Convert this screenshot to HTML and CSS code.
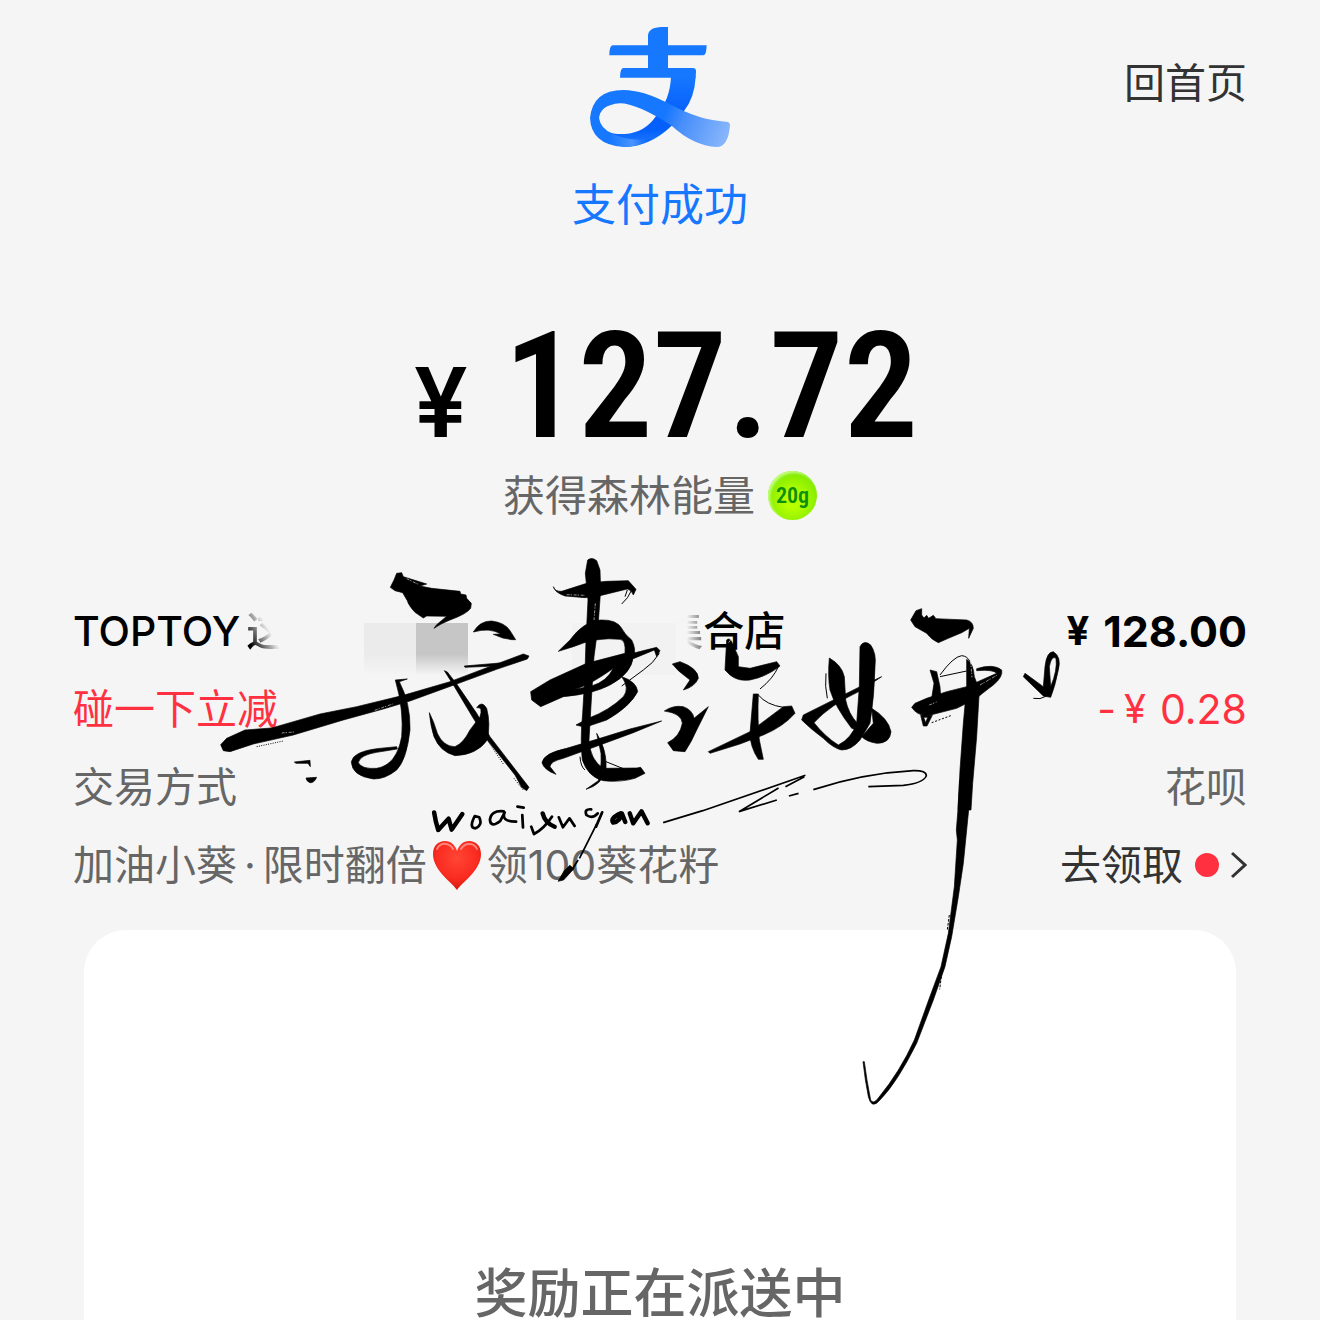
FILE: index.html
```
<!DOCTYPE html>
<html lang="zh-CN">
<head>
<meta charset="utf-8">
<meta name="viewport" content="width=device-width, initial-scale=1">
<title>支付成功</title>
<link rel="stylesheet" href="styles.css">
</head>
<body>
<main class="page">
  <header class="header">
    <svg class="logo" viewBox="60 51 420 360" aria-hidden="true">
      <defs>
        <linearGradient id="leg" x1="0" y1="200" x2="0" y2="400" gradientUnits="userSpaceOnUse">
          <stop offset="0" stop-color="#1677ff"/><stop offset=".55" stop-color="#0560fb"/><stop offset=".8" stop-color="#0560fb"/><stop offset="1" stop-color="#1d78ff"/>
        </linearGradient>
        <linearGradient id="ribbon" x1="290" y1="300" x2="470" y2="370" gradientUnits="userSpaceOnUse">
          <stop offset="0" stop-color="#1677ff"/><stop offset=".3" stop-color="#488ffb"/><stop offset="1" stop-color="#86b5fb"/>
        </linearGradient>
        <linearGradient id="curl" x1="120" y1="0" x2="240" y2="0" gradientUnits="userSpaceOnUse">
          <stop offset="0" stop-color="#1677ff"/><stop offset=".55" stop-color="#4a94ff"/><stop offset="1" stop-color="#0560fb"/>
        </linearGradient>
      </defs>
      <path fill="#1677ff" d="M234 180V76Q236 52 275 51H294V180ZM118 136Q118 107 128 106H410Q409 136 400 136ZM150 203Q150 174 161 174H368Q378 174 378 184L377 203Z"/>
      <path fill="url(#leg)" d="M303 200H377Q374 262 342 303L305 347Q240 410 160 411L110 365Q130 373 165 372Q225 368 258 318Q300 270 303 200Z"/>
      <path fill="url(#curl)" d="M87 324Q92 356 126 370Q170 396 246 387Q205 411 160 411Q62 404 60 322Z"/>
      <path fill="url(#ribbon)" d="M60 325Q68 240 160 240Q220 240 300 283Q390 332 468 335Q480 336 480 345Q475 411 440 411Q370 407 305 347Q200 280 150 280Q88 285 87 328Z"/>
    </svg>
    <h1 class="status">支付成功</h1>
    <a class="home" href="#">回首页</a>
  </header>

  <p class="amount"><span class="currency">¥</span><span>127.72</span></p>
  <p class="energy">获得森林能量<span class="bubble">20g</span></p>

  <section class="details">
    <div class="row merchant">
      <span class="name"><span>TOPTOY</span><span class="fade-out">这</span><span class="mosaic"><i class="tile light"></i><i class="tile dark"></i></span><span class="mosaic pale"></span><span class="fade-in">集</span><span>合店</span></span>
      <span class="price"><span class="yen">¥</span>128.00</span>
    </div>
    <div class="row discount">
      <span>碰一下立减</span>
      <span class="price"><span class="minus">-</span><span class="yen">¥</span>0.28</span>
    </div>
    <div class="row">
      <span>交易方式</span>
      <span>花呗</span>
    </div>
    <div class="row">
      <span class="promo">加油小葵<span class="separator">·</span>限时翻倍<svg class="heart" viewBox="0 0 50 50" role="img" aria-label="红心"><defs><radialGradient id="red" cx=".5" cy=".35" r=".65"><stop offset="0" stop-color="#ff4535"/><stop offset=".65" stop-color="#fa2b20"/><stop offset="1" stop-color="#d4170f"/></radialGradient></defs><path fill="url(#red)" d="M25 50C21 43 1 31 1 14C1 6 6 1 13 1C19 1 23 5 25 11C27 5 31 1 37 1C44 1 49 6 49 14C49 31 29 43 25 50Z"/><path fill="none" stroke="#ff9b92" stroke-width="2" stroke-linecap="round" opacity=".8" d="M5 9Q8 3 14 4Q19 5 21 9M29 9Q32 4 37 4Q43 4 45 9"/></svg>领100葵花籽</span>
      <a class="claim" href="#">去领取<i class="dot"></i><svg class="chevron" viewBox="0 0 16 28" aria-hidden="true"><path d="M1 2L14 14L1 26"/></svg></a>
    </div>

    <!-- Brush signature laid over the receipt -->
    <svg class="ink" viewBox="210 540 860 580" aria-hidden="true">
      <g transform="translate(210 540) scale(.33333)">
        <path d="M541 142L552 120L560 100L575 98L580 110L605 118L650 132L630 138L665 145L750 154L752 162L768 165L770 175L784 190L782 205Q770 222 720 240Q690 252 672 265L680 254L710 229L650 228L640 234L615 217Q595 195 592 182L578 158L555 152Z"/>
        <path d="M790 276Q810 242 845 243Q885 248 900 272L917 299L905 299L878 294L850 283L872 282Q840 262 790 276Z"/>
        <path d="M32 614L50 595L105 570L185 564L240 548L330 522L440 500L580 466L720 425L860 372L940 342L957 348L952 357L860 388L740 432L600 483L520 507L400 540L250 585L130 612L60 635L40 632Z"/>
        <path d="M763 378L870 369L860 378L765 382Z"/>
        <path d="M556 420L592 417L568 425Q602 490 600 570Q590 660 560 690Q525 718 490 717Q425 708 424 665Q430 635 500 626L560 620L562 627L500 637Q450 645 445 668Q455 688 500 685Q560 675 575 590Q582 510 556 420Z"/>
        <path d="M703 392L712 396L740 432L800 520L840 590L957 742L950 752L935 742L915 705L832 600L790 535L732 438Z"/>
        <path d="M658 518Q672 545 682 580Q700 620 735 620Q760 610 780 570L810 530Q820 500 800 503Q815 480 830 505Q842 550 832 600Q800 645 735 647Q690 635 672 590Q662 560 658 518Z"/>
        <path d="M253 666L300 661L301 680L294 670L258 670ZM288 714L320 712Q312 730 300 728Q290 725 288 714Z"/>
        <path class="wisp" stroke-dasharray="3 4" d="M140 620L220 603M835 605L880 672M912 715L940 750"/>
        <path class="scratch" d="M494 511L548 492M215 579L252 576M590 116L625 133"/>
      </g>
      <g transform="translate(520 540) scale(.33333)">
        <path d="M203 60Q215 50 230 62L240 90L242 150L234 260L222 350L214 480L207 600Q210 660 250 685L350 684L362 682L375 700L345 715Q300 728 250 722Q205 712 187 660Q180 600 188 520L195 400L198 300L204 180L196 100Z"/>
        <path d="M100 140Q105 155 125 154L200 130L260 124L325 122L348 148L340 165Q335 150 322 147L240 167L195 173L135 168Q105 158 100 140Z"/>
        <path fill-rule="evenodd" d="M115 334L150 300Q190 245 240 240Q290 238 305 265Q315 285 335 300Q350 330 340 350Q335 400 270 435Q220 462 130 470L62 500L35 480L32 455L90 420L200 370L315 340Q318 300 300 298Q230 290 160 320ZM165 448Q210 435 280 385Q260 425 215 438Z"/>
        <path d="M330 342L410 322L420 332L410 350L403 330L340 356Z"/>
        <path d="M305 410Q350 425 353 455Q330 500 260 540L195 562L168 555L205 535Q270 510 310 470Q330 445 305 410Z"/>
        <path d="M425 543L330 567L240 595L140 625Q70 640 66 668Q72 690 108 703L90 680Q90 665 130 655L240 615L340 578Z"/>
        <path d="M230 580Q262 630 258 690Q245 735 198 748L235 722Q245 690 243 640Z"/>
        <path d="M457 372L480 365Q535 385 535 415Q525 440 490 450L510 420L475 392Z"/>
        <path d="M433 513Q460 495 490 500Q518 510 522 535L565 500L530 570Q515 605 495 635L460 632L443 608Q480 590 487 550Q485 520 433 513Z"/>
        <path d="M620 300Q628 292 635 305L655 350L655 380L690 385L770 365L780 378Q740 410 690 420Q655 425 630 405L615 390Z"/>
        <path d="M700 462L715 462Q712 540 718 600L730 658L715 658Q690 620 690 580Z"/>
        <path d="M565 635L690 575L790 500L815 498L825 520Q790 560 730 585L660 612L570 640Z"/>
        <path class="wisp" d="M335 150Q325 175 305 192M322 150L315 170M418 340Q400 370 370 390L305 438M258 665L310 686M775 380Q760 415 720 447M715 465Q740 495 790 502M180 650Q182 680 195 690"/>
        <path class="scratch" d="M226 190L222 240M140 164L195 166M626 308L632 300"/>
      </g>
      <g transform="translate(780 590) scale(.33333)">
        <path d="M148 204Q185 225 193 260L197 330Q205 370 232 400L245 425L215 415Q165 350 150 300Q143 260 148 204Z"/>
        <path d="M240 170Q252 148 272 165Q290 190 285 230Q283 320 270 400L240 450Q215 480 185 480Q160 475 130 445Q90 415 65 390L70 375L120 350L240 290L305 260L240 303Q150 345 102 398Q135 440 175 465Q215 445 230 400L238 290Z"/>
        <path d="M275 355Q325 385 333 425Q330 460 290 460Q260 455 245 440L280 400Z"/>
        <path d="M392 90L408 62L425 56L425 75L432 84L440 76L446 85L460 76L468 86L560 90Q580 95 580 115L566 145L568 115L545 128L505 145L475 158Q455 150 440 130L405 110Z"/>
        <path d="M450 240L470 245L480 290L482 320L455 325L462 280Z"/>
        <path d="M395 352L405 340L440 325L500 305L560 290L650 250Q640 238 590 242L590 236Q640 220 665 240Q670 260 640 285Q600 315 590 325L530 355L440 378Q410 375 395 352Z"/>
        <path fill-rule="evenodd" d="M422 376L430 408L441 408L457 376ZM431 382L443 382L437 398Z"/>
        <path d="M560 208Q580 220 583 260L598 300L590 440L578 580L573 660L534 660L540 540L550 400L560 290Z"/>
        <path fill-rule="evenodd" d="M735 250L790 290L795 230Q800 185 820 185Q845 200 835 240Q825 290 812 322L790 318L730 260ZM812 290Q833 240 828 205Q815 195 808 230Z"/>
        <path class="wisp" d="M480 260L560 243M480 255Q520 200 545 197Q562 198 570 215M760 325Q780 330 800 318M138 250Q134 290 142 325"/>
        <path class="wisp" stroke-dasharray="6 5" d="M455 398L515 376"/>
        <path class="scratch" d="M600 285L652 255M572 215L576 262M448 345L470 336"/>
        <path class="sweep" d="M100 599Q250 550 400 542Q440 541 439 558Q428 580 370 586L265 590"/>
      </g>
      <g transform="translate(840 780) scale(.33333)">
        <path d="M354 88L359 0L394 0L390 60L386 90L378 170L370 250L355 350L335 470L315 560L280 660L230 790Q170 910 120 960Q95 990 85 950Q75 900 69 845L73 845Q80 900 92 960Q100 974 115 954Q180 875 223 780L266 660L303 560L325 460L343 320L352 180L349 150Z"/>
        <path class="wisp" stroke-dasharray="8 4" d="M328 405L322 450M304 590L299 628"/>
      </g>
      <g transform="translate(410 750) scale(.34444 .33333)">
        <path class="sweep" d="M735 218L850 182L1148 76M1070 114L955 185L1065 150M1090 110L1145 80M1100 138L1128 130"/>
        <path class="pen bold" d="M70 187Q74 215 82 240L112 206L121 239L152 192"/>
        <path class="pen" d="M188 198Q170 235 190 235Q212 225 201 202ZM272 184Q235 180 232 210Q235 235 262 213L275 187Q263 215 308 215M326 195L328 232M312 170L330 173M412 200Q390 235 360 252L352 230M432 202L444 232L463 205L478 228"/>
        <path class="pen bold" d="M385 190Q392 220 420 230M612 190Q580 205 590 218Q610 215 615 190L625 216M638 190L648 220L672 184L690 220"/>
        <path class="pen" d="M526 178Q505 176 512 195Q530 208 545 190M558 187L540 230"/>
        <path class="sweep" d="M543 220L492 325M488 330L470 360"/>
        <path d="M430 394L448 362L464 346L476 356L446 390Z"/>
      </g>
    </svg>
  </section>

  <section class="card">
    <p class="reward">奖励正在派送中</p>
  </section>
</main>
</body>
</html>
```
FILE: styles.css
```
* { box-sizing: border-box; }

body {
  margin: 0;
  background: #f5f5f5;
  color: #666;
  font: 400 41px/48px Inter, "Noto Sans CJK SC", sans-serif;
}

p, h1 { margin: 0; }

a { color: #333; text-decoration: none; }

.page {
  display: flex;
  flex-direction: column;
  height: 100vh;
  overflow: hidden;
}

.header {
  position: relative;
  display: flex;
  flex-direction: column;
  align-items: center;
  padding-top: 27px;
}

.logo { width: 140px; height: 120px; }

.status {
  margin-top: 26px;
  color: #1677ff;
  font-size: 44px;
  font-weight: 400;
  line-height: 64px;
}

.home {
  position: absolute;
  top: 59px;
  right: 73px;
}

.amount {
  display: flex;
  justify-content: center;
  align-items: baseline;
  gap: 36px;
  height: 140px;
  margin-top: 80px;
  padding-left: 12px;
  color: #000;
  font: 600 148px/140px "Roboto Condensed", Roboto, sans-serif;
}

.currency {
  font: 600 96px/96px Inter, sans-serif;
}

.energy {
  display: flex;
  justify-content: center;
  align-items: center;
  gap: 13px;
  margin-top: 14px;
  font-size: 42px;
}

.bubble {
  width: 49px;
  height: 49px;
  border-radius: 50%;
  background: radial-gradient(circle at 50% 60%, #b8ff00 20%, #8df000 60%, #5fd60a 100%);
  box-shadow: inset 2px 2px 3px #c9ff8a;
  color: #0c8f0c;
  font: 600 22px/50px "Roboto Condensed", Roboto, sans-serif;
  text-align: center;
}

.details {
  position: relative;
  margin-top: 72px;
  padding: 0 73px;
}

.row {
  display: flex;
  justify-content: space-between;
  align-items: center;
  height: 78px;
}

.merchant { color: #000; font-weight: 500; }
.merchant .price { font-size: 43px; font-weight: 700; }
.discount { color: #ff3141; }

.name { display: flex; align-items: center; }

.price { display: flex; }
.yen { margin-right: 14px; font-size: 40px; }
.minus { margin-right: 8px; }

.fade-out {
  margin-left: 6px;
  -webkit-mask-image: linear-gradient(60deg, #000 15%, transparent 55%);
  mask-image: linear-gradient(60deg, #000 15%, transparent 55%);
}

.fade-in {
  -webkit-mask-image: linear-gradient(90deg, transparent 60%, #0008 100%);
  mask-image: linear-gradient(90deg, transparent 60%, #0008 100%);
}

.mosaic {
  display: flex;
  width: 104px;
  height: 52px;
  margin: 36px 0 0 77px;
}

.tile { flex: 1; }
.light { background: linear-gradient(#ebebeb 60%, #f5f5f5); }
.dark { background: linear-gradient(#c6c6c6 60%, #f5f5f5); }

.pale {
  margin: 36px -14px 0 104px;
  background: #f2f2f2;
}

.promo { display: flex; align-items: center; }
.separator { padding: 0 7px; }
.heart { width: 50px; height: 50px; margin: 0 5px; }

.claim { display: flex; align-items: center; }

.dot {
  width: 24px;
  height: 24px;
  margin: 0 12px;
  border-radius: 50%;
  background: #ff3141;
}

.chevron {
  width: 16px;
  height: 28px;
  fill: none;
  stroke: #333;
  stroke-width: 3;
}

.ink {
  position: absolute;
  top: -52px;
  left: calc(50% - 450px);
  width: 860px;
  height: 580px;
  fill: #000;
  stroke: #000;
  stroke-width: 2;
  pointer-events: none;
}

.wisp, .sweep, .scratch, .pen {
  fill: none;
  stroke: #000;
  stroke-width: 3;
}

.scratch { stroke: #ddd; stroke-width: 2; stroke-dasharray: 9 3 4 5; }
.sweep { stroke-width: 5; }
.pen { stroke-width: 8; stroke-linecap: round; stroke-linejoin: round; }
.bold { stroke-width: 13; }

.card {
  flex: 1 0 auto;
  margin: 26px 84px 0;
  padding-top: 338px;
  border-radius: 42px 42px 0 0;
  background: #fff;
}

.reward {
  font-size: 53px;
  font-weight: 500;
  line-height: 52px;
  text-align: center;
}
```
